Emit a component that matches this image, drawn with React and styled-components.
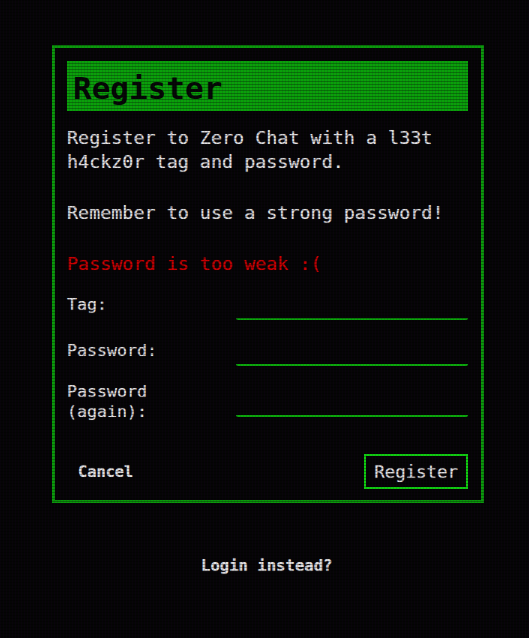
import React, { useState } from "react";
import styled, { createGlobalStyle } from "styled-components";

const GlobalStyle = createGlobalStyle`
  html, body {
    margin: 0;
    padding: 0;
    background: #050505;
  }
  body {
    font-family: "DejaVu Sans Mono", "Liberation Mono", monospace;
    color: #e0e0e0;
    text-shadow: 0 0 1px rgba(224, 224, 224, 0.45);
  }
`;

export default function App() {
  const [tag, setTag] = useState("");
  const [password, setPassword] = useState("");
  const [again, setAgain] = useState("");

  return (
    <>
      <GlobalStyle />
      <Page>
        <Panel>
          <Title>Register</Title>
          <Text>
            Register to Zero Chat with a l33t
            <br />
            h4ckz0r tag and password.
          </Text>
          <Text>Remember to use a strong password!</Text>
          <ErrorText>Password is too weak :(</ErrorText>

          <Form onSubmit={(e) => e.preventDefault()}>
            <Row>
              <Label htmlFor="tag">Tag:</Label>
              <Input id="tag" value={tag} onChange={(e) => setTag(e.target.value)} />
            </Row>
            <Row>
              <Label htmlFor="password">Password:</Label>
              <Input
                id="password"
                type="password"
                value={password}
                onChange={(e) => setPassword(e.target.value)}
              />
            </Row>
            <Row>
              <Label htmlFor="again">Password (again):</Label>
              <Input
                id="again"
                type="password"
                value={again}
                onChange={(e) => setAgain(e.target.value)}
              />
            </Row>

            <Actions>
              <TextButton type="button">Cancel</TextButton>
              <SubmitButton type="submit">Register</SubmitButton>
            </Actions>
          </Form>
        </Panel>

        <LoginLink href="#">Login instead?</LoginLink>
      </Page>
      <Scanlines />
    </>
  );
}

const Page = styled.div`
  display: flex;
  flex-direction: column;
  align-items: flex-start;
  padding: 45px 0 0 52px;
  min-height: 638px;
  box-sizing: border-box;
`;

const Panel = styled.div`
  width: 432px;
  box-sizing: border-box;
  border: 3px solid #0b9a0b;
  padding: 13px 13px 11px 12px;
`;

const Title = styled.h1`
  margin: 0;
  height: 50px;
  display: flex;
  align-items: center;
  padding: 3px 0 0 6px;
  box-sizing: border-box;
  background: #0aa00a;
  color: #050805;
  font-size: 31px;
  font-weight: bold;
  text-shadow: none;
`;

const Text = styled.p`
  margin: 15px 0 27px 0;
  font-size: 18.4px;
  line-height: 24px;
  white-space: nowrap;

  & + & {
    margin-top: 0;
  }
`;

const ErrorText = styled(Text)`
  color: #cc0000;
  text-shadow: 0 0 1px rgba(204, 0, 0, 0.45);
  margin: 0 0 14px 0;
`;

const Form = styled.form`
  display: flex;
  flex-direction: column;
  gap: 16px;
`;

const Row = styled.div`
  display: flex;
  align-items: center;
`;

const Label = styled.label`
  width: 169px;
  flex: none;
  font-size: 16.6px;
  line-height: 20px;
`;

const Input = styled.input`
  flex: 1;
  min-width: 0;
  height: 30px;
  box-sizing: border-box;
  background: transparent;
  border: none;
  border-bottom: 2px solid #0ba80b;
  border-radius: 0 0 2px 2px;
  color: #e0e0e0;
  font-family: inherit;
  font-size: 16px;
  outline: none;
`;

const Actions = styled.div`
  display: flex;
  justify-content: space-between;
  align-items: center;
  margin-top: 16px;
`;

const TextButton = styled.button`
  background: none;
  border: none;
  color: #e0e0e0;
  text-shadow: inherit;
  font-family: inherit;
  font-size: 15.3px;
  font-weight: bold;
  padding: 8px 11px;
  cursor: pointer;
`;

const SubmitButton = styled.button`
  height: 35px;
  padding: 0 8px;
  background: #050505;
  border: 2px solid #10cc10;
  color: #e0e0e0;
  text-shadow: inherit;
  font-family: inherit;
  font-size: 17.4px;
  cursor: pointer;
`;

const LoginLink = styled.a`
  align-self: flex-start;
  margin: 54px 0 0 149px;
  color: #e0e0e0;
  font-size: 15.6px;
  font-weight: bold;
  text-decoration: none;
`;

const Scanlines = styled.div`
  position: fixed;
  inset: 0;
  pointer-events: none;
  background:
    repeating-linear-gradient(
      to bottom,
      rgba(0, 0, 0, 0.28) 0px,
      rgba(0, 0, 0, 0.28) 1px,
      transparent 1px,
      transparent 3px
    ),
    repeating-linear-gradient(
      to right,
      rgba(40, 0, 60, 0.12) 0px,
      rgba(40, 0, 60, 0.12) 1px,
      transparent 1px,
      transparent 3px
    );
`;
